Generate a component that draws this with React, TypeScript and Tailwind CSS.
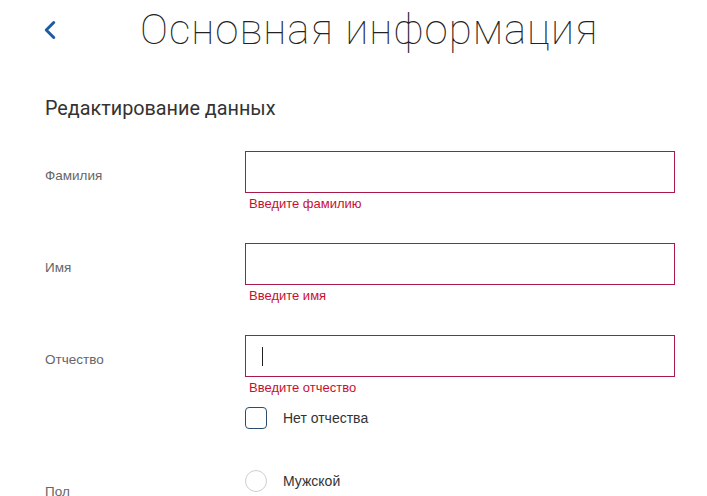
import { ChevronLeft } from 'lucide-react'

interface Field {
  label: string
  error: string
  cursor?: boolean
}

const fields: Field[] = [
  { label: 'Фамилия', error: 'Введите фамилию' },
  { label: 'Имя', error: 'Введите имя' },
  { label: 'Отчество', error: 'Введите отчество', cursor: true },
]

export default function App() {
  return (
    <div className="min-h-screen bg-white pl-[45px] pr-[32px] font-['Liberation_Sans',Arial,sans-serif] overflow-hidden h-[496px]">
      {/* Header */}
      <div className="flex items-center h-[58px] pt-[1px]">
        <ChevronLeft size={30} strokeWidth={2.4} className="text-[#1d5ba6] -ml-[10px] mt-[1px] shrink-0" />
        <h1 className="ml-[75px] text-[42px] leading-none font-thin tracking-[1px] text-[#222] font-['Roboto',sans-serif]">
          Основная информация
        </h1>
      </div>

      <h2 className="mt-[39px] text-[19.8px] leading-[24px] text-[#333] font-['Roboto',sans-serif]">
        Редактирование данных
      </h2>

      {/* Form */}
      <div className="mt-[30px] flex flex-col">
        {fields.map((f) => (
          <div key={f.label} className="flex h-[92px]">
            <div className="w-[200px] h-[42px] flex items-center text-[13.5px] text-[#666] pt-[8px]">{f.label}</div>
            <div className="w-[430px]">
              <div className="h-[42px] border border-[#a81a47] flex items-center px-[16px]">
                {f.cursor && <span className="w-px h-[19px] bg-[#222]" />}
              </div>
              <div className="mt-[4px] pl-[4px] text-[13px] leading-[14px] text-[#c8102e]">{f.error}</div>
            </div>
          </div>
        ))}
        <div className="-mt-[20px] ml-[200px] flex items-center gap-[16px]">
          <span className="w-[22px] h-[22px] rounded-[4px] border border-[#2b4d70]" />
          <span className="text-[14px] text-[#333]">Нет отчества</span>
        </div>
        <div className="mt-[31px] flex">
          <div className="w-[200px] pt-[22px] text-[13.5px] text-[#666]">Пол</div>
          <div className="flex items-center gap-[16px]">
            <span className="w-[22px] h-[22px] rounded-full border border-[#cfcfcf]" />
            <span className="text-[14px] text-[#333]">Мужской</span>
          </div>
        </div>
      </div>
    </div>
  )
}
